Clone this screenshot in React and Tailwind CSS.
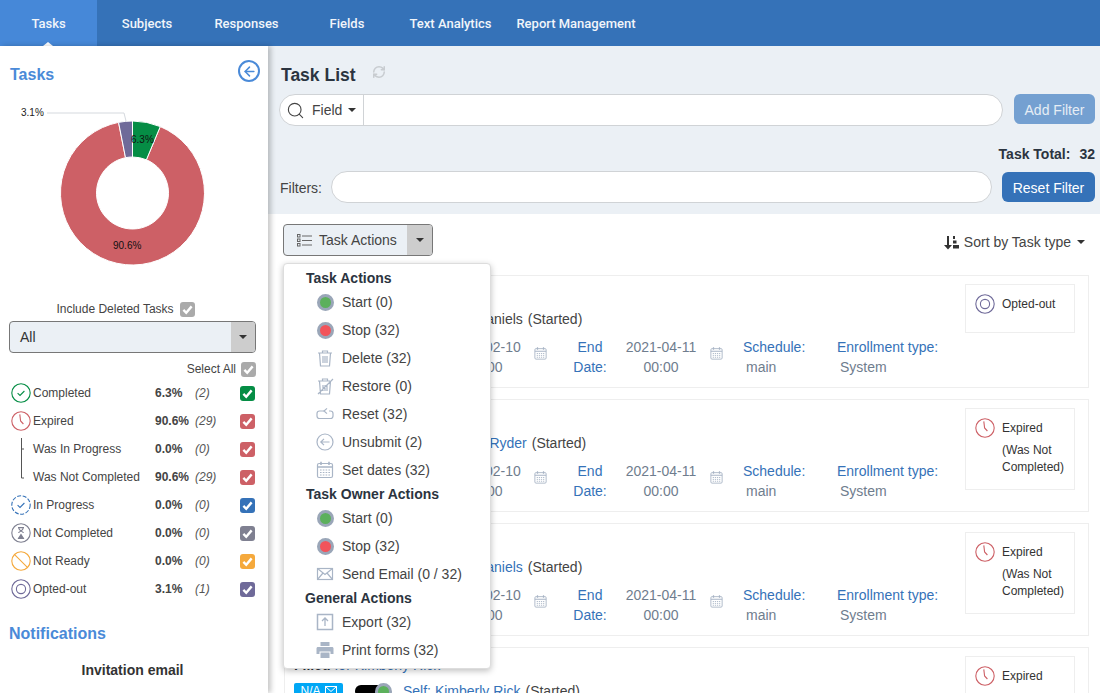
import React from 'react';
import { ArrowLeft, RefreshCw, Search } from 'lucide-react';

const tabs = [
  { name: 'Tasks', w: 'w-[97px]', active: true },
  { name: 'Subjects', w: 'w-[100px]' },
  { name: 'Responses', w: 'w-[99px]' },
  { name: 'Fields', w: 'w-[102px]' },
  { name: 'Text Analytics', w: 'w-[105px]' },
  { name: 'Report Management', w: 'w-[146px]' },
];

// donut slice between two angles, degrees clockwise from 12 o'clock
const slice = (from, to, cx = 132.5, cy = 93, r1 = 72, r2 = 36) => {
  const pt = (r, a) => {
    const t = ((a - 90) * Math.PI) / 180;
    return `${(cx + r * Math.cos(t)).toFixed(2)} ${(cy + r * Math.sin(t)).toFixed(2)}`;
  };
  const big = to - from > 180 ? 1 : 0;
  return `M${pt(r1, from)} A${r1} ${r1} 0 ${big} 1 ${pt(r1, to)} L${pt(r2, to)} A${r2} ${r2} 0 ${big} 0 ${pt(r2, from)} Z`;
};

const Caret = ({ className = 'border-t-[#333]' }) => (
  <span className={`inline-block w-0 h-0 border-x-[4px] border-x-transparent border-t-[4px] ${className}`}></span>
);

const Check = ({ color }) => (
  <span className={`w-[15px] h-[15px] rounded-[3px] flex items-center justify-center flex-shrink-0 ${color}`}>
    <svg width="11" height="11" viewBox="0 0 12 12" fill="none" stroke="white" strokeWidth="2.6">
      <path d="M1.5 6.5 L4.6 9.6 L10.5 2.6" />
    </svg>
  </span>
);

const StatusIcon = ({ type, size = 20 }) => {
  const common = { width: size, height: size, viewBox: '0 0 20 20', fill: 'none', strokeWidth: 1.1 };
  if (type === 'completed')
    return (
      <svg {...common} stroke="#058d45">
        <circle cx="10" cy="10" r="9.2" />
        <path d="M6.6 10.2 L9 12.4 L13.4 8" />
      </svg>
    );
  if (type === 'expired')
    return (
      <svg {...common} stroke="#cd6066">
        <circle cx="10" cy="10" r="9.2" />
        <path d="M8.8 3.4 L9.6 10 L12.4 13" />
      </svg>
    );
  if (type === 'progress')
    return (
      <svg {...common} stroke="#3572b8">
        <circle cx="10" cy="10" r="9.2" strokeDasharray="4 1.6" />
        <path d="M6.6 10.2 L9 12.4 L13.4 8" />
      </svg>
    );
  if (type === 'notcompleted')
    return (
      <svg {...common} stroke="#7f8091">
        <circle cx="10" cy="10" r="9.2" />
        <path d="M7 4.6 H13 M7 15.4 H13 M7.6 4.6 C7.6 8 12.4 8.4 12.4 10 M12.4 4.6 C12.4 8 7.6 8.4 7.6 10" />
        <path d="M7.6 15.4 L10 11.6 L12.4 15.4 Z" fill="#7f8091" />
      </svg>
    );
  if (type === 'notready')
    return (
      <svg {...common} stroke="#f5a93c">
        <circle cx="10" cy="10" r="9.2" />
        <path d="M3.6 3.6 L16.4 16.4" />
      </svg>
    );
  return (
    <svg {...common} stroke="#6f6a99">
      <circle cx="10" cy="10" r="9.2" />
      <circle cx="10" cy="10" r="4.6" />
    </svg>
  );
};

const Connector = ({ last }) => (
  <svg width="20" height="28" viewBox="0 0 20 28" fill="none" stroke="#555" strokeWidth="1">
    {last ? <path d="M10.5 0 V15 H13" /> : <path d="M10.5 3 V28 M10.5 14 H13" />}
  </svg>
);

const statusRows = [
  { label: 'Completed', pct: '6.3%', n: '(2)', icon: 'completed', color: 'bg-[#058d45]' },
  { label: 'Expired', pct: '90.6%', n: '(29)', icon: 'expired', color: 'bg-[#cd6066]' },
  { label: 'Was In Progress', pct: '0.0%', n: '(0)', sub: 'mid', color: 'bg-[#cd6066]' },
  { label: 'Was Not Completed', pct: '90.6%', n: '(29)', sub: 'last', color: 'bg-[#cd6066]' },
  { label: 'In Progress', pct: '0.0%', n: '(0)', icon: 'progress', color: 'bg-[#3572b8]' },
  { label: 'Not Completed', pct: '0.0%', n: '(0)', icon: 'notcompleted', color: 'bg-[#7f8091]' },
  { label: 'Not Ready', pct: '0.0%', n: '(0)', icon: 'notready', color: 'bg-[#f5a93c]' },
  { label: 'Opted-out', pct: '3.1%', n: '(1)', icon: 'optedout', color: 'bg-[#6f6a99]' },
];

const Dot = ({ color }) => (
  <span className={`block w-[17px] h-[17px] rounded-full border-[3px] border-[#9aa6b8] ${color}`}></span>
);

const grayIcon = { width: 20, height: 20, viewBox: '0 0 20 20', fill: 'none', stroke: '#a9b5c6', strokeWidth: 1.2 };

const CalendarIcon = ({ size = 20 }) => (
  <svg {...grayIcon} width={size} height={size}>
    <rect x="2.5" y="3.5" width="15" height="14" rx="1.5" />
    <path d="M2.5 7 H17.5 M6 1.8 V5 M14 1.8 V5" strokeWidth="1.6" />
    <path d="M5 10 H15 M5 12.5 H15 M5 15 H15" strokeDasharray="1.6 1.2" />
  </svg>
);

const menuIcons = {
  delete: (
    <svg {...grayIcon}>
      <path d="M3 5 H17 M7.5 5 V3 H12.5 V5 M4.5 5 L5.5 18 H14.5 L15.5 5 M8 8 V15 M10 8 V15 M12 8 V15" />
    </svg>
  ),
  restore: (
    <svg {...grayIcon}>
      <path d="M3 5 H15 M7.5 5 V3 H12.5 V5 M4.5 5 L5.5 18 H14.5 L15.5 5 M8 9 V15 M10 9 V15 M12 9 V15 M3 18 L18 3" />
    </svg>
  ),
  reset: (
    <svg {...grayIcon}>
      <path d="M9 7 H4.5 C3 7 2 8 2 9.5 V12 C2 13.5 3 14.5 4.5 14.5 H15.5 C17 14.5 18 13.5 18 12 V9.5 C18 8 17 7 15.5 7 H14" />
      <path d="M12 4.4 L9 7 L12 9.6" />
    </svg>
  ),
  unsubmit: (
    <svg {...grayIcon}>
      <circle cx="10" cy="10" r="8" />
      <path d="M14.5 10 H6 M9 6.8 L5.8 10 L9 13.2" />
    </svg>
  ),
  dates: <CalendarIcon />,
  email: (
    <svg {...grayIcon}>
      <rect x="2.5" y="4.5" width="15" height="11" />
      <path d="M2.5 4.5 L10 10.5 L17.5 4.5 M2.5 15.5 L8 9 M17.5 15.5 L12 9" />
    </svg>
  ),
  export: (
    <svg {...grayIcon} strokeWidth="1.5">
      <rect x="2.5" y="2.5" width="15" height="15" />
      <path d="M10 14 V6.5 M7 9 L10 6 L13 9" strokeWidth="1.3" />
    </svg>
  ),
  print: (
    <svg width="20" height="20" viewBox="0 0 20 20" fill="#a9b5c6">
      <path d="M5.5 2 H14.5 V6 H5.5 Z M3 7 H17 C18 7 18.5 7.6 18.5 8.5 V14 H15.5 V11.5 H4.5 V14 H1.5 V8.5 C1.5 7.6 2 7 3 7 Z M5.5 12.5 H14.5 V18 H5.5 Z" />
    </svg>
  ),
};

const taskMenu = [
  { heading: 'Task Actions', ml: 'pl-[22px]' },
  { label: 'Start (0)', dot: 'bg-[#5cb05c]' },
  { label: 'Stop (32)', dot: 'bg-[#f2545b]' },
  { label: 'Delete (32)', icon: 'delete' },
  { label: 'Restore (0)', icon: 'restore' },
  { label: 'Reset (32)', icon: 'reset' },
  { label: 'Unsubmit (2)', icon: 'unsubmit' },
  { label: 'Set dates (32)', icon: 'dates' },
  { heading: 'Task Owner Actions', ml: 'pl-[22px]' },
  { label: 'Start (0)', dot: 'bg-[#5cb05c]' },
  { label: 'Stop (32)', dot: 'bg-[#f2545b]' },
  { label: 'Send Email (0 / 32)', icon: 'email' },
  { heading: 'General Actions', ml: 'pl-[21px]' },
  { label: 'Export (32)', icon: 'export' },
  { label: 'Print forms (32)', icon: 'print' },
];

const tasks = [
  { owner: 'Sarah Daniels', linked: false, status: 'optedout', label: 'Opted-out' },
  { owner: 'Meghan Ryder', linked: true, status: 'expired', label: 'Expired', note: true },
  { owner: 'Sarah Daniels', linked: true, status: 'expired', label: 'Expired', note: true },
  { owner: 'Kimberly Rick', linked: true, status: 'expired', label: 'Expired', note: true },
];

const TaskCard = ({ task }) => (
  <div className="h-[113px] flex-shrink-0 border border-[#eeeeee] pl-[9px] pr-[13px] flex justify-between">
    <div className="pt-[7px]">
      <div className="h-[20px] leading-[20px] text-sm text-[#3572b8]">
        <b className="text-[#2b3440]">Filled</b> for {task.owner}
      </div>
      <div className="h-[20px] mt-[6px] flex items-center">
        <span className="w-[49px] h-[17px] rounded-[2px] bg-[#00a7f5] text-white text-xs flex items-center justify-center gap-1">
          N/A
          <svg width="12" height="10" viewBox="0 0 12 10" fill="none" stroke="white">
            <rect x="0.5" y="0.5" width="11" height="9" />
            <path d="M0.5 0.5 L6 5.5 L11.5 0.5" />
          </svg>
        </span>
        <span className="ml-[12px] w-[30px] h-[12px] rounded-l-full bg-black"></span>
        <span className="-ml-[10px] mr-[11px]">
          <Dot color="bg-[#5cb05c]" />
        </span>
        <span className="text-sm whitespace-nowrap text-[#444]">
          <span className={task.linked ? 'text-[#3572b8]' : 'text-[#444]'}>Self: {task.owner}</span>
          <span className="ml-[5px]">(Started)</span>
        </span>
      </div>
      <div className="mt-[8px] flex text-sm leading-[20px] whitespace-nowrap">
        <div className="ml-[95px] w-[50px] text-center text-[#3572b8]">Start<br />Date:</div>
        <div className="ml-[11px] w-[70px] flex flex-col items-center text-[#6f7d8e]"><span>2021-02-10</span><span>00:00</span></div>
        <div className="ml-[13px] w-[14px] pt-[9px]"><CalendarIcon size={15} /></div>
        <div className="ml-[18px] w-[50px] text-center text-[#3572b8]">End<br />Date:</div>
        <div className="ml-[11px] w-[70px] flex flex-col items-center text-[#6f7d8e]"><span>2021-04-11</span><span>00:00</span></div>
        <div className="ml-[13px] w-[14px] pt-[9px]"><CalendarIcon size={15} /></div>
        <div className="ml-[20px] w-[94px] text-[#3572b8]">
          Schedule:
          <div className="pl-[3px] text-[#6f7d8e]">main</div>
        </div>
        <div className="text-[#3572b8]">
          Enrollment type:
          <div className="pl-[3px] text-[#6f7d8e]">System</div>
        </div>
      </div>
    </div>
    <div className={`mt-[8px] w-[110px] border border-[#eeeeee] pl-[9px] pt-[9px] text-xs text-[#333] ${task.note ? 'h-[82px]' : 'h-[49px]'}`}>
      <div className="flex items-center gap-[7px]">
        <StatusIcon type={task.status} />
        <span>{task.label}</span>
      </div>
      {task.note && (
        <div className="ml-[27px] mt-[4px] leading-[17px]">
          (Was Not
          <br />
          Completed)
        </div>
      )}
    </div>
  </div>
);

const App = () => {
  return (
    <div className="w-[1100px] h-[693px] overflow-hidden flex flex-col bg-white font-['Liberation_Sans',Arial,sans-serif] text-[#333]">
      {/* top nav */}
      <nav className="h-[46px] flex-shrink-0 flex bg-[#3572b8] font-['Roboto',sans-serif]">
        {tabs.map((t) => (
          <div
            key={t.name}
            className={`relative ${t.w} pt-[1px] flex items-center justify-center text-[13px] font-medium text-[#f1f5fa] whitespace-nowrap ${t.active ? 'bg-[#4688d8] font-bold' : ''}`}
          >
            {t.name}
            {t.active && (
              <span className="absolute bottom-0 left-[43px] w-0 h-0 border-x-[5px] border-x-transparent border-b-[4px] border-b-white"></span>
            )}
          </div>
        ))}
      </nav>

      <div className="flex-1 min-h-0 flex">
        {/* sidebar */}
        <aside className="relative z-10 w-[268px] flex-shrink-0 bg-white shadow-[3px_0_5px_rgba(0,0,0,0.22)] overflow-hidden">
          <div className="pt-[20px] pl-[10px] pr-[8px] h-[38px] flex items-center justify-between">
            <h2 className="text-base font-bold text-[#4a8ad8]">Tasks</h2>
            <span className="w-[22px] h-[22px] -mt-[8px] rounded-full border-2 border-[#4a8ad8] flex items-center justify-center">
              <ArrowLeft size={15} strokeWidth={2.4} className="text-[#4a8ad8]" />
            </span>
          </div>
          <svg width="268" height="170" viewBox="0 0 268 170" className="block mt-[16px]">
            <path d={slice(22.68, 348.84)} fill="#cd6066" stroke="white" strokeWidth="1" />
            <path d={slice(348.84, 360)} fill="#6f6a99" stroke="white" strokeWidth="1" />
            <path d={slice(0, 22.68)} fill="#058d45" stroke="white" strokeWidth="1" />
            <path d="M47 13 H124 L126 21" fill="none" stroke="#d5d9de" />
            <text x="21" y="16" fontSize="10" fill="#222">3.1%</text>
            <text x="131" y="43" fontSize="10" fill="#111">6.3%</text>
            <text x="113" y="149" fontSize="10" fill="#111">90.6%</text>
          </svg>
          <div className="mt-[30px] h-[18px] pr-[17px] flex items-center justify-center gap-[6px] text-xs text-[#444]">
            Include Deleted Tasks
            <Check color="bg-[#aaaaaa]" />
          </div>
          <div className="mt-[3px] mx-[9px] w-[247px] h-[32px] rounded-[4px] border border-[#777] bg-[#ebf0f5] flex overflow-hidden">
            <span className="flex-1 pl-[10px] text-sm leading-[30px]">All</span>
            <span className="w-[24px] bg-[#cdcdcd] flex items-center justify-center"><Caret /></span>
          </div>
          <div className="mt-[7px] h-[18px] pr-[12px] flex items-center justify-end gap-[5px] text-xs text-[#444]">
            Select All
            <Check color="bg-[#aaaaaa]" />
          </div>
          <div className="pl-[11px] pt-[1px]">
            {statusRows.map((r) => (
              <div key={r.label} className="h-[28px] flex items-center text-xs">
                <span className="w-[20px] flex-shrink-0">
                  {r.icon ? <StatusIcon type={r.icon} /> : <Connector last={r.sub === 'last'} />}
                </span>
                <span className="ml-[2px] w-[122px] text-[#444] whitespace-nowrap">{r.label}</span>
                <span className="w-[40px] font-bold text-[#444]">{r.pct}</span>
                <span className="w-[45px] italic text-[#555]">{r.n}</span>
                <Check color={r.color} />
              </div>
            ))}
          </div>
          <h2 className="mt-[21px] pl-[9px] h-[20px] leading-[20px] text-base font-bold text-[#4a8ad8]">Notifications</h2>
          <div className="mt-[16px] h-[20px] leading-[20px] text-sm font-bold text-center text-[#333] pr-[3px]">Invitation email</div>
        </aside>

        <main className="flex-1 min-w-0 flex flex-col">
          {/* filter panel */}
          <section className="h-[168px] flex-shrink-0 bg-[#ebf0f5] pl-[11px] pr-[5px] text-sm">
            <div className="h-[48px] pl-[2px] pt-[10px] flex items-center gap-[16px]">
              <h1 className="text-[17.5px] font-bold text-[#2b3440]">Task List</h1>
              <RefreshCw size={14} strokeWidth={2.6} className="text-[#c8ccd0] -mt-[6px]" />
            </div>
            <div className="flex gap-[11px]">
              <div className="w-[724px] h-[32px] rounded-[16px] border border-[#d0d3d6] bg-white flex items-center">
                <Search size={19} strokeWidth={1.4} className="ml-[6px] text-[#444]" />
                <span className="ml-[7px] text-[#444]">Field</span>
                <span className="ml-[6px] flex"><Caret /></span>
                <span className="ml-[7px] h-full border-l border-[#d0d3d6]"></span>
              </div>
              <div className="w-[81px] h-[30px] pt-[1px] rounded-[6px] bg-[#74a0d1] text-[#e6edf5] flex items-center justify-center">Add Filter</div>
            </div>
            <div className="mt-[19px] h-[18px] flex justify-end items-center gap-[9px] font-bold text-[#2b3440]">
              <span>Task Total:</span>
              <span>32</span>
            </div>
            <div className="mt-[8px] flex items-center">
              <span className="ml-[1px] w-[51px] pt-[1px] text-[#444]">Filters:</span>
              <div className="w-[661px] h-[32px] rounded-[16px] border border-[#d0d3d6] bg-white"></div>
              <div className="ml-[10px] w-[93px] h-[30px] pt-[1px] rounded-[6px] bg-[#3572b8] text-white flex items-center justify-center">Reset Filter</div>
            </div>
          </section>

          <section className="flex-1 min-h-0 pl-[16px] pr-[11px] overflow-hidden text-sm">
            {/* toolbar + dropdown */}
            <div className="h-[61px] flex justify-between">
              <div className="relative mt-[10px] h-[32px] w-[150px] -ml-[1px]">
                <div className="h-full rounded-[4px] border border-[#777] bg-[#ebf0f5] flex overflow-hidden">
                  <span className="flex-1 flex items-center pl-[13px] gap-[7px] text-[#444]">
                    <svg width="15" height="13" viewBox="0 0 15 13" fill="none" stroke="#666">
                      <rect x="0.5" y="0.5" width="2.5" height="2.5" />
                      <rect x="0.5" y="5" width="2.5" height="2.5" />
                      <rect x="0.5" y="9.5" width="2.5" height="2.5" />
                      <path d="M5 2 H15 M5 6.5 H15 M5 11 H15" />
                    </svg>
                    Task Actions
                  </span>
                  <span className="w-[25px] bg-[#cdcdcd] flex items-center justify-center"><Caret /></span>
                </div>
                <div className="absolute z-20 top-[39px] left-0 w-[208px] h-[406px] rounded-[4px] border border-[#ddd] bg-white shadow-[0_2px_6px_rgba(0,0,0,0.25)] pt-[4px] text-[#444]">
                  {taskMenu.map((m, i) =>
                    m.heading ? (
                      <div key={i} className={`h-[20px] leading-[20px] font-bold text-[#2b3440] ${m.ml}`}>{m.heading}</div>
                    ) : (
                      <div key={i} className="h-[28px] flex items-center">
                        <span className="ml-[31px] w-[20px] flex justify-center">
                          {m.dot ? <Dot color={m.dot} /> : menuIcons[m.icon]}
                        </span>
                        <span className="ml-[7px] whitespace-nowrap">{m.label}</span>
                      </div>
                    )
                  )}
                </div>
              </div>
              <div className="mt-[18px] h-[20px] pr-[4px] flex items-center text-[#444]">
                <svg width="15" height="15" viewBox="0 0 15 15" fill="#333" className="mr-[5px]">
                  <path d="M3 1 H5 V10 H8 L4 14.5 L0 10 H3 Z M9 1 H11 V4 H9 Z M9 5.5 H12.5 V8.5 H9 Z M9 10 H15 V13.5 H9 Z" />
                </svg>
                Sort by Task type
                <span className="ml-[6px] flex"><Caret /></span>
              </div>
            </div>
            <div className="flex flex-col gap-[11px]">
              {tasks.map((t, i) => (
                <TaskCard key={i} task={t} />
              ))}
            </div>
          </section>
        </main>
      </div>
    </div>
  );
};

export default App;
